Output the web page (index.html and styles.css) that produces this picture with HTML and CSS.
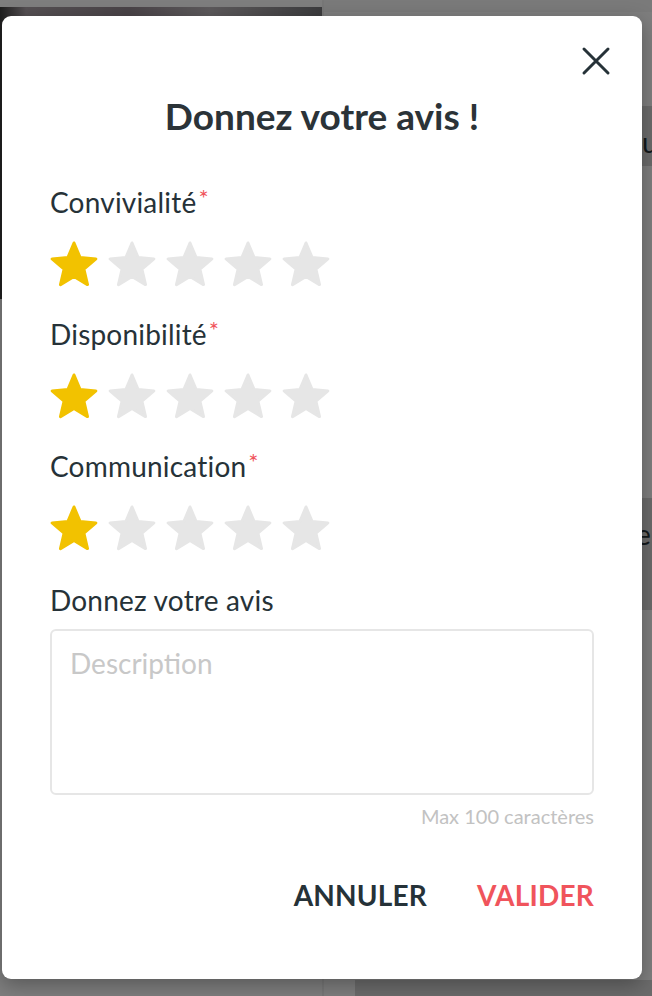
FILE: index.html
```html
<!DOCTYPE html>
<html lang="fr">
<head>
    <meta charset="UTF-8">
    <meta name="viewport" content="width=device-width, initial-scale=1.0">
    <title>Donnez votre avis</title>
    <link rel="stylesheet" href="styles.css">
</head>
<body>
    <svg class="sprites" aria-hidden="true">
        <symbol id="star" viewBox="0 0 50 48">
            <polygon points="25,2 31.11,16.59 46.87,17.89 34.89,28.21 38.52,43.61 25,35.4 11.48,43.61 15.11,28.21 3.13,17.89 18.89,16.59" stroke-linejoin="round" stroke-width="3"></polygon>
        </symbol>
    </svg>

    <!-- page behind the dialog -->
    <div class="page">
        <div class="page-left">
            <div class="cover"></div>
        </div>
        <div class="page-right">
            <div class="band band-top">u</div>
            <div class="band band-mid">er</div>
            <div class="band band-bottom"></div>
        </div>
    </div>
    <div class="overlay"></div>

    <div class="modal">
        <button class="close" aria-label="Fermer">
            <svg width="30" height="30" viewBox="0 0 30 30">
                <path d="M3 3L27 27M27 3L3 27" stroke="#263238" stroke-width="3" stroke-linecap="round"></path>
            </svg>
        </button>

        <h2 class="modal-title">Donnez votre avis !</h2>

        <div class="rating">
            <div class="rating-label">Convivialité<span class="required">*</span></div>
            <div class="stars">
                <svg class="star on"><use href="#star"></use></svg>
                <svg class="star"><use href="#star"></use></svg>
                <svg class="star"><use href="#star"></use></svg>
                <svg class="star"><use href="#star"></use></svg>
                <svg class="star"><use href="#star"></use></svg>
            </div>
        </div>

        <div class="rating">
            <div class="rating-label">Disponibilité<span class="required">*</span></div>
            <div class="stars">
                <svg class="star on"><use href="#star"></use></svg>
                <svg class="star"><use href="#star"></use></svg>
                <svg class="star"><use href="#star"></use></svg>
                <svg class="star"><use href="#star"></use></svg>
                <svg class="star"><use href="#star"></use></svg>
            </div>
        </div>

        <div class="rating">
            <div class="rating-label">Communication<span class="required">*</span></div>
            <div class="stars">
                <svg class="star on"><use href="#star"></use></svg>
                <svg class="star"><use href="#star"></use></svg>
                <svg class="star"><use href="#star"></use></svg>
                <svg class="star"><use href="#star"></use></svg>
                <svg class="star"><use href="#star"></use></svg>
            </div>
        </div>

        <div class="field">
            <label class="rating-label" for="comment">Donnez votre avis</label>
            <textarea id="comment" class="comment" placeholder="Description" maxlength="100"></textarea>
            <div class="counter">Max 100 caractères</div>
        </div>

        <div class="actions">
            <button class="btn btn-cancel">ANNULER</button>
            <button class="btn btn-ok">VALIDER</button>
        </div>
    </div>
</body>
</html>
```

FILE: styles.css
```css
body {
    margin: 0;
    padding: 0;
    width: 652px;
    height: 996px;
    overflow: hidden;
    font-family: 'Lato', 'Noto Sans', sans-serif;
    background-color: #ffffff;
    color: #263238;
}
.sprites {
    position: absolute;
    width: 0;
    height: 0;
}

/* Background page */
.page {
    display: flex;
    height: 996px;
    background-color: #fdfdfd;
}
.page-left {
    flex-shrink: 0;
    width: 324px;
    border-right: 2px solid #eeeeee;
    padding-top: 7px;
    box-sizing: border-box;
}
.cover {
    height: 292px;
    background: linear-gradient(90deg, #3c3c3c 0%, #aaa0a6 8%, #948890 40%, #bab4b8 65%, #78787c 100%);
}
.page-right {
    flex: 1;
    min-width: 0;
    border-top: 12px solid #f4f4f4;
    display: flex;
    flex-direction: column;
}
.band {
    background-color: #d6d6d6;
    font-size: 28px;
    color: #263238;
    padding-left: 318px;
    white-space: nowrap;
    overflow: hidden;
}
.band-top {
    margin-top: 94px;
    height: 60px;
    line-height: 72px;
}
.band-mid {
    margin-top: 332px;
    height: 112px;
    line-height: 72px;
    padding-left: 312px;
}
.band-bottom {
    margin-top: auto;
    margin-left: 31px;
    height: 16px;
}
.overlay {
    position: absolute;
    inset: 0;
    background-color: rgba(0, 0, 0, 0.5);
}

/* Dialog */
.modal {
    position: absolute;
    left: 2px;
    top: 16px;
    width: 640px;
    height: 963px;
    box-sizing: border-box;
    padding: 78px 48px 0 48px;
    background: #fff;
    border-radius: 9px;
    box-shadow: 0 6px 20px rgba(0, 0, 0, 0.3);
    display: flex;
    flex-direction: column;
}
.close {
    position: absolute;
    top: 30px;
    right: 31px;
    width: 30px;
    height: 30px;
    padding: 0;
    border: none;
    background: none;
}
.close svg {
    display: block;
}
.modal-title {
    margin: 0 0 49px 0;
    font-size: 37px;
    line-height: 44px;
    font-weight: 700;
    text-align: center;
    color: #2b3338;
}
.rating {
    margin-bottom: 30px;
}
.rating-label {
    display: block;
    font-size: 28px;
    line-height: 30px;
    color: #263238;
    letter-spacing: 0.2px;
}
.required {
    position: relative;
    top: -6px;
    margin-left: 2px;
    color: #f0545c;
    font-size: 24px;
    line-height: 0;
}
.stars {
    display: flex;
    gap: 8px;
    margin-top: 24px;
    margin-left: -1px;
}
.star {
    width: 50px;
    height: 48px;
    fill: #e6e6e6;
    stroke: #e6e6e6;
}
.star.on {
    fill: #f2c200;
    stroke: #f2c200;
}
.field {
    display: flex;
    flex-direction: column;
    margin-top: 2px;
}
.comment {
    margin-top: 14px;
    height: 166px;
    box-sizing: border-box;
    padding: 15px 18px;
    border: 2px solid #e6e6e6;
    border-radius: 6px;
    resize: none;
    font-family: inherit;
    font-size: 28px;
    line-height: 34px;
    color: #263238;
    outline: none;
}
.comment::placeholder {
    color: #c8c8c8;
}
.counter {
    margin-top: 9px;
    font-size: 20px;
    line-height: 24px;
    text-align: right;
    color: #c2c2c2;
}
.actions {
    display: flex;
    justify-content: flex-end;
    gap: 50px;
    margin-top: 51px;
}
.btn {
    padding: 0;
    border: none;
    background: none;
    font-family: inherit;
    font-size: 28px;
    line-height: 32px;
    font-weight: 700;
    letter-spacing: 0.2px;
    cursor: pointer;
}
.btn-cancel {
    color: #263238;
}
.btn-ok {
    color: #f0545c;
}
```
